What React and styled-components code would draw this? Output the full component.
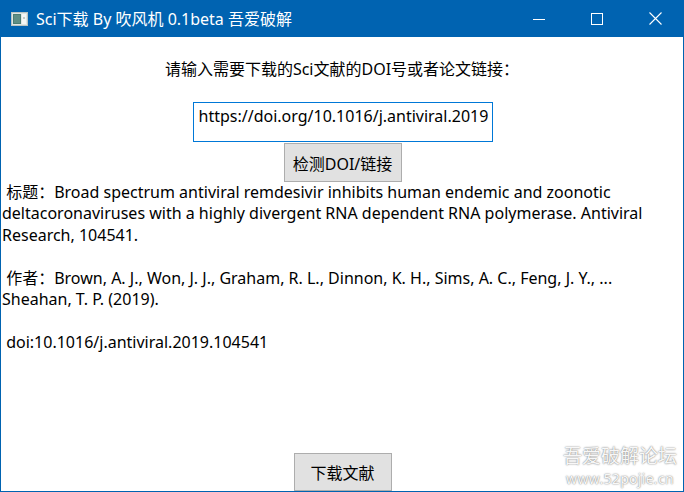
import React from "react";
import styled, { createGlobalStyle } from "styled-components";

const GlobalStyle = createGlobalStyle`
  html, body {
    margin: 0;
    padding: 0;
    background: #ffffff;
  }
  * {
    box-sizing: border-box;
  }
`;

const FONT = `"Noto Sans", "Noto Sans CJK SC", sans-serif`;

const Window = styled.div`
  width: 684px;
  height: 492px;
  display: flex;
  flex-direction: column;
  background: #ffffff;
  border: 1px solid #0063b1;
  border-top: none;
  font-family: ${FONT};
  color: #000000;
  overflow: hidden;
`;

const TitleBar = styled.div`
  height: 37px;
  flex: none;
  display: flex;
  align-items: center;
  background: #0063b1;
  color: #ffffff;
  margin: 0 -1px;
`;

const AppIcon = styled.svg`
  width: 17px;
  height: 14px;
  margin: 0 8px 0 11px;
  flex: none;
`;

const Title = styled.div`
  flex: 1;
  font-size: 16px;
  line-height: 20px;
  white-space: nowrap;
`;

const CaptionButton = styled.div`
  width: 58px;
  height: 37px;
  display: flex;
  align-items: center;
  justify-content: center;
`;

const Body = styled.div`
  flex: 1;
  position: relative;
  display: flex;
  flex-direction: column;
  padding-top: 21px;
`;

const Prompt = styled.div`
  text-align: center;
  font-size: 16px;
  line-height: 22px;
`;

const UrlInput = styled.input`
  align-self: center;
  width: 300px;
  height: 40px;
  margin-top: 22px;
  margin-left: 1px;
  padding: 0 0 12px 5px;
  border: 1px solid #0078d7;
  outline: none;
  font-family: ${FONT};
  font-size: 16px;
  color: #000000;
  background: #ffffff;
`;

const Button = styled.button`
  align-self: center;
  width: ${(p) => p.$w}px;
  height: ${(p) => p.$h}px;
  margin-top: ${(p) => p.$mt || 0}px;
  margin-left: ${(p) => p.$ml || 0}px;
  background: #e1e1e1;
  border: 1px solid #adadad;
  border-radius: 0;
  padding: 0;
  font-family: ${FONT};
  font-size: 16px;
  color: #000000;
`;

const Info = styled.div`
  padding: 0 4px 0 1px;
  font-size: 16px;
  line-height: 21.4px;
  white-space: pre-wrap;
`;

const Para = styled.p`
  margin: 0 0 21.4px 0;
`;

const Spacer = styled.div`
  flex: 1;
`;

const Watermark = styled.div`
  position: absolute;
  right: 6px;
  bottom: 3px;
  display: flex;
  flex-direction: column;
  align-items: center;
  gap: 1px;
  color: rgba(255, 255, 255, 0.95);
  text-shadow: 0 0 2px rgba(0, 0, 0, 0.45), 0 0 1px rgba(0, 0, 0, 0.3);
  font-family: ${FONT};
`;

const WatermarkTitle = styled.div`
  font-size: 19px;
  line-height: 25px;
`;

const WatermarkUrl = styled.div`
  font-size: 14px;
  line-height: 18px;
  letter-spacing: 0.3px;
`;

const App = () => {
  return (
    <>
      <GlobalStyle />
      <Window>
        <TitleBar>
          <AppIcon viewBox="0 0 17 14">
            <rect x="0.5" y="0.5" width="16" height="13" fill="#dfe6e4" stroke="#b9c4c2" />
            <rect x="2" y="2" width="8" height="10" fill="#4c7e74" />
            <rect x="3" y="3" width="6" height="8" fill="#5f8f86" />
            <rect x="11" y="2" width="4" height="10" fill="#f4f7f6" />
            <rect x="12" y="5" width="2" height="2" fill="#c3ccca" />
          </AppIcon>
          <Title>Sci下载 By 吹风机 0.1beta 吾爱破解</Title>
          <CaptionButton>
            <svg width="12" height="12" viewBox="0 0 12 12">
              <line x1="0" y1="6.5" x2="12" y2="6.5" stroke="#fff" strokeWidth="1" />
            </svg>
          </CaptionButton>
          <CaptionButton>
            <svg width="12" height="12" viewBox="0 0 12 12">
              <rect x="0.5" y="0.5" width="11" height="11" fill="none" stroke="#fff" strokeWidth="1" />
            </svg>
          </CaptionButton>
          <CaptionButton>
            <svg width="13" height="13" viewBox="0 0 13 13">
              <path d="M0.5 0.5 L12.5 12.5 M12.5 0.5 L0.5 12.5" stroke="#fff" strokeWidth="1.1" />
            </svg>
          </CaptionButton>
        </TitleBar>
        <Body>
          <Prompt>请输入需要下载的Sci文献的DOI号或者论文链接：</Prompt>
          <UrlInput defaultValue="https://doi.org/10.1016/j.antiviral.2019" />
          <Button $w={118} $h={39} $mt={1} $ml={1}>
            检测DOI/链接
          </Button>
          <Info>
            <Para>
              {" 标题：Broad spectrum antiviral remdesivir inhibits human endemic and zoonotic deltacoronaviruses with a highly divergent RNA dependent RNA polymerase. Antiviral Research, 104541."}
            </Para>
            <Para>
              {" 作者：Brown, A. J., Won, J. J., Graham, R. L., Dinnon, K. H., Sims, A. C., Feng, J. Y., ... Sheahan, T. P. (2019)."}
            </Para>
            <Para>{" doi:10.1016/j.antiviral.2019.104541"}</Para>
          </Info>
          <Spacer />
          <Button $w={98} $h={38} $ml={1}>
            下载文献
          </Button>
          <Watermark>
            <WatermarkTitle>吾爱破解论坛</WatermarkTitle>
            <WatermarkUrl>www.52pojie.cn</WatermarkUrl>
          </Watermark>
        </Body>
      </Window>
    </>
  );
};

export default App;
